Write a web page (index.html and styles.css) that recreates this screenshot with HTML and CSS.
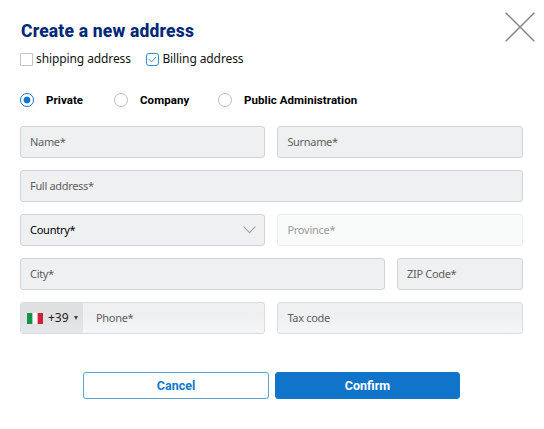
FILE: index.html
```html
<!DOCTYPE html>
<html lang="en">
<head>
  <meta charset="UTF-8">
  <title>Create a new address</title>
  <link rel="stylesheet" href="styles.css">
</head>
<body>
  <div class="modal">
    <button class="close" type="button" aria-label="Close">
      <svg width="30" height="30" viewBox="0 0 30 30"><path d="M.7.7l28.6 28.6M29.3.7L.7 29.3" fill="none" stroke="#858585" stroke-width="1.5"/></svg>
    </button>
    <h1><span>Create a new address</span></h1>
    <div class="checks">
      <label class="check"><i class="box"></i><span>shipping address</span></label>
      <label class="check"><i class="box checked"><svg width="11" height="11" viewBox="0 0 11 11"><path d="M1.8 5.2l2.7 2.7 4.8-5" fill="none" stroke="#2d8fd8" stroke-width="1"/></svg></i><span>Billing address</span></label>
    </div>
    <div class="radios">
      <label class="radio private"><i class="dot selected"></i><span>Private</span></label>
      <label class="radio company"><i class="dot"></i><span>Company</span></label>
      <label class="radio"><i class="dot"></i><span>Public Administration</span></label>
    </div>
    <form class="form">
      <div class="row halves">
        <div class="field"><span>Name*</span></div>
        <div class="field"><span>Surname*</span></div>
      </div>
      <div class="row">
        <div class="field"><span>Full address*</span></div>
      </div>
      <div class="row halves">
        <div class="field select">
          <span>Country*</span>
          <svg width="13" height="8" viewBox="0 0 13 8"><path d="M.6.7l5.9 6 5.9-6" fill="none" stroke="#a3a5a7" stroke-width="1.2"/></svg>
        </div>
        <div class="field disabled"><span>Province*</span></div>
      </div>
      <div class="row city-zip">
        <div class="field"><span>City*</span></div>
        <div class="field"><span>ZIP Code*</span></div>
      </div>
      <div class="row halves">
        <div class="field phone fade">
          <div class="prefix">
            <svg class="flag" width="16" height="11" viewBox="0 0 16 11"><path fill="#fff" d="M0 0h16v11H0z"/><path fill="#149247" d="M0 0h5.4v11H0z"/><path fill="#cd2339" d="M10.6 0H16v11h-5.4z"/></svg>
            <span>+39</span>
            <i class="caret"></i>
          </div>
          <span>Phone*</span>
        </div>
        <div class="field fade"><span>Tax code</span></div>
      </div>
    </form>
    <div class="actions">
      <button class="btn cancel" type="button"><span>Cancel</span></button>
      <button class="btn confirm" type="button"><span>Confirm</span></button>
    </div>
  </div>
</body>
</html>
```

FILE: styles.css
```css
* { box-sizing: border-box; }
body {
  margin: 0;
  background: #fff;
  color: #111;
  font-family: "Noto Sans", sans-serif;
}
span { white-space: nowrap; }
.modal {
  position: relative;
  height: 429px;
  padding: 20px 21px 0 20px;
}
.close {
  position: absolute;
  top: 12px;
  right: 9px;
  width: 30px;
  height: 30px;
  padding: 0;
  border: 0;
  background: none;
}
.close svg { display: block; }
h1 {
  margin: 0;
  height: 22px;
  line-height: 22px;
  font-family: Roboto, sans-serif;
  font-size: 17.5px;
  font-weight: 800;
  letter-spacing: .18px;
  color: #002878;
  padding-left: 1px;
}
.checks {
  display: flex;
  gap: 15.5px;
  margin-top: 7px;
  height: 20px;
}
.check {
  display: flex;
  align-items: center;
  font-size: 12px;
  line-height: 20px;
  letter-spacing: -.1px;
}
.box {
  width: 13px;
  height: 13px;
  margin-right: 3px;
  border: 1px solid #c4c4c4;
  border-radius: 1px;
}
.box.checked {
  border-color: #2d8fd8;
  border-radius: 3px;
}
.box svg { display: block; }
.radios {
  display: flex;
  height: 20px;
  margin-top: 21px;
  font-family: Roboto, sans-serif;
  font-size: 11.5px;
  font-weight: 700;
  letter-spacing: .07px;
  color: #000;
}
.radio {
  display: flex;
  align-items: center;
}
.radio.private { width: 94px; }
.radio.company { width: 104px; }
.dot {
  width: 14px;
  height: 14px;
  margin-right: 12px;
  border: 1px solid #bdbdbd;
  border-radius: 50%;
}
.dot.selected {
  border-color: #1177cc;
  background: radial-gradient(circle, #1177cc 3px, #fff 3.8px);
}
.form {
  display: flex;
  flex-direction: column;
  gap: 12px;
  margin-top: 16px;
}
.row {
  display: grid;
  gap: 12.4px;
}
.row.halves { grid-template-columns: 245px 1fr; }
.row.city-zip { grid-template-columns: 1fr 126px; }
.field {
  display: flex;
  align-items: center;
  height: 32px;
  padding: 0 9px;
  border: 1px solid #d2d3d4;
  border-radius: 3px;
  background: #eff0f2;
  font-size: 11px;
  letter-spacing: -.32px;
  color: #5f5f5f;
}
.field span { padding-bottom: 2px; }
.field.select {
  justify-content: space-between;
  padding-right: 8px;
  letter-spacing: -.25px;
  color: #000;
}
.field.disabled {
  border-color: #ebeded;
  background: #f9fbfa;
  letter-spacing: -.25px;
  color: #999;
}
.field.fade {
  background: linear-gradient(#eff0f2 50%, #f5f6f7);
  border-color: #dadbdc;
}
.field.phone { padding: 0; }
.prefix {
  display: flex;
  align-items: center;
  width: 62px;
  height: 100%;
  padding-left: 6px;
  margin-right: 13px;
  background: linear-gradient(#dfe0e2 50%, #e7e8ea);
  font-size: 12px;
  letter-spacing: 0;
  color: #222;
}
.prefix span { margin: 0 5px; }
.caret {
  border: 2.5px solid transparent;
  border-top: 4px solid #444;
  border-bottom: 0;
}
.actions {
  display: flex;
  gap: 6px;
  margin: 37.5px 0 0 63px;
}
.btn {
  width: 186px;
  height: 27px;
  padding: 0;
  border: 1px solid #1177cc;
  border-radius: 3px;
  font: 700 12.5px Roboto, sans-serif;
}
.btn.cancel {
  border-color: #56a3dc;
  background: #fff;
  color: #1177cc;
}
.btn.confirm {
  width: 185px;
  background: #1075ca;
  color: #fff;
}
```
